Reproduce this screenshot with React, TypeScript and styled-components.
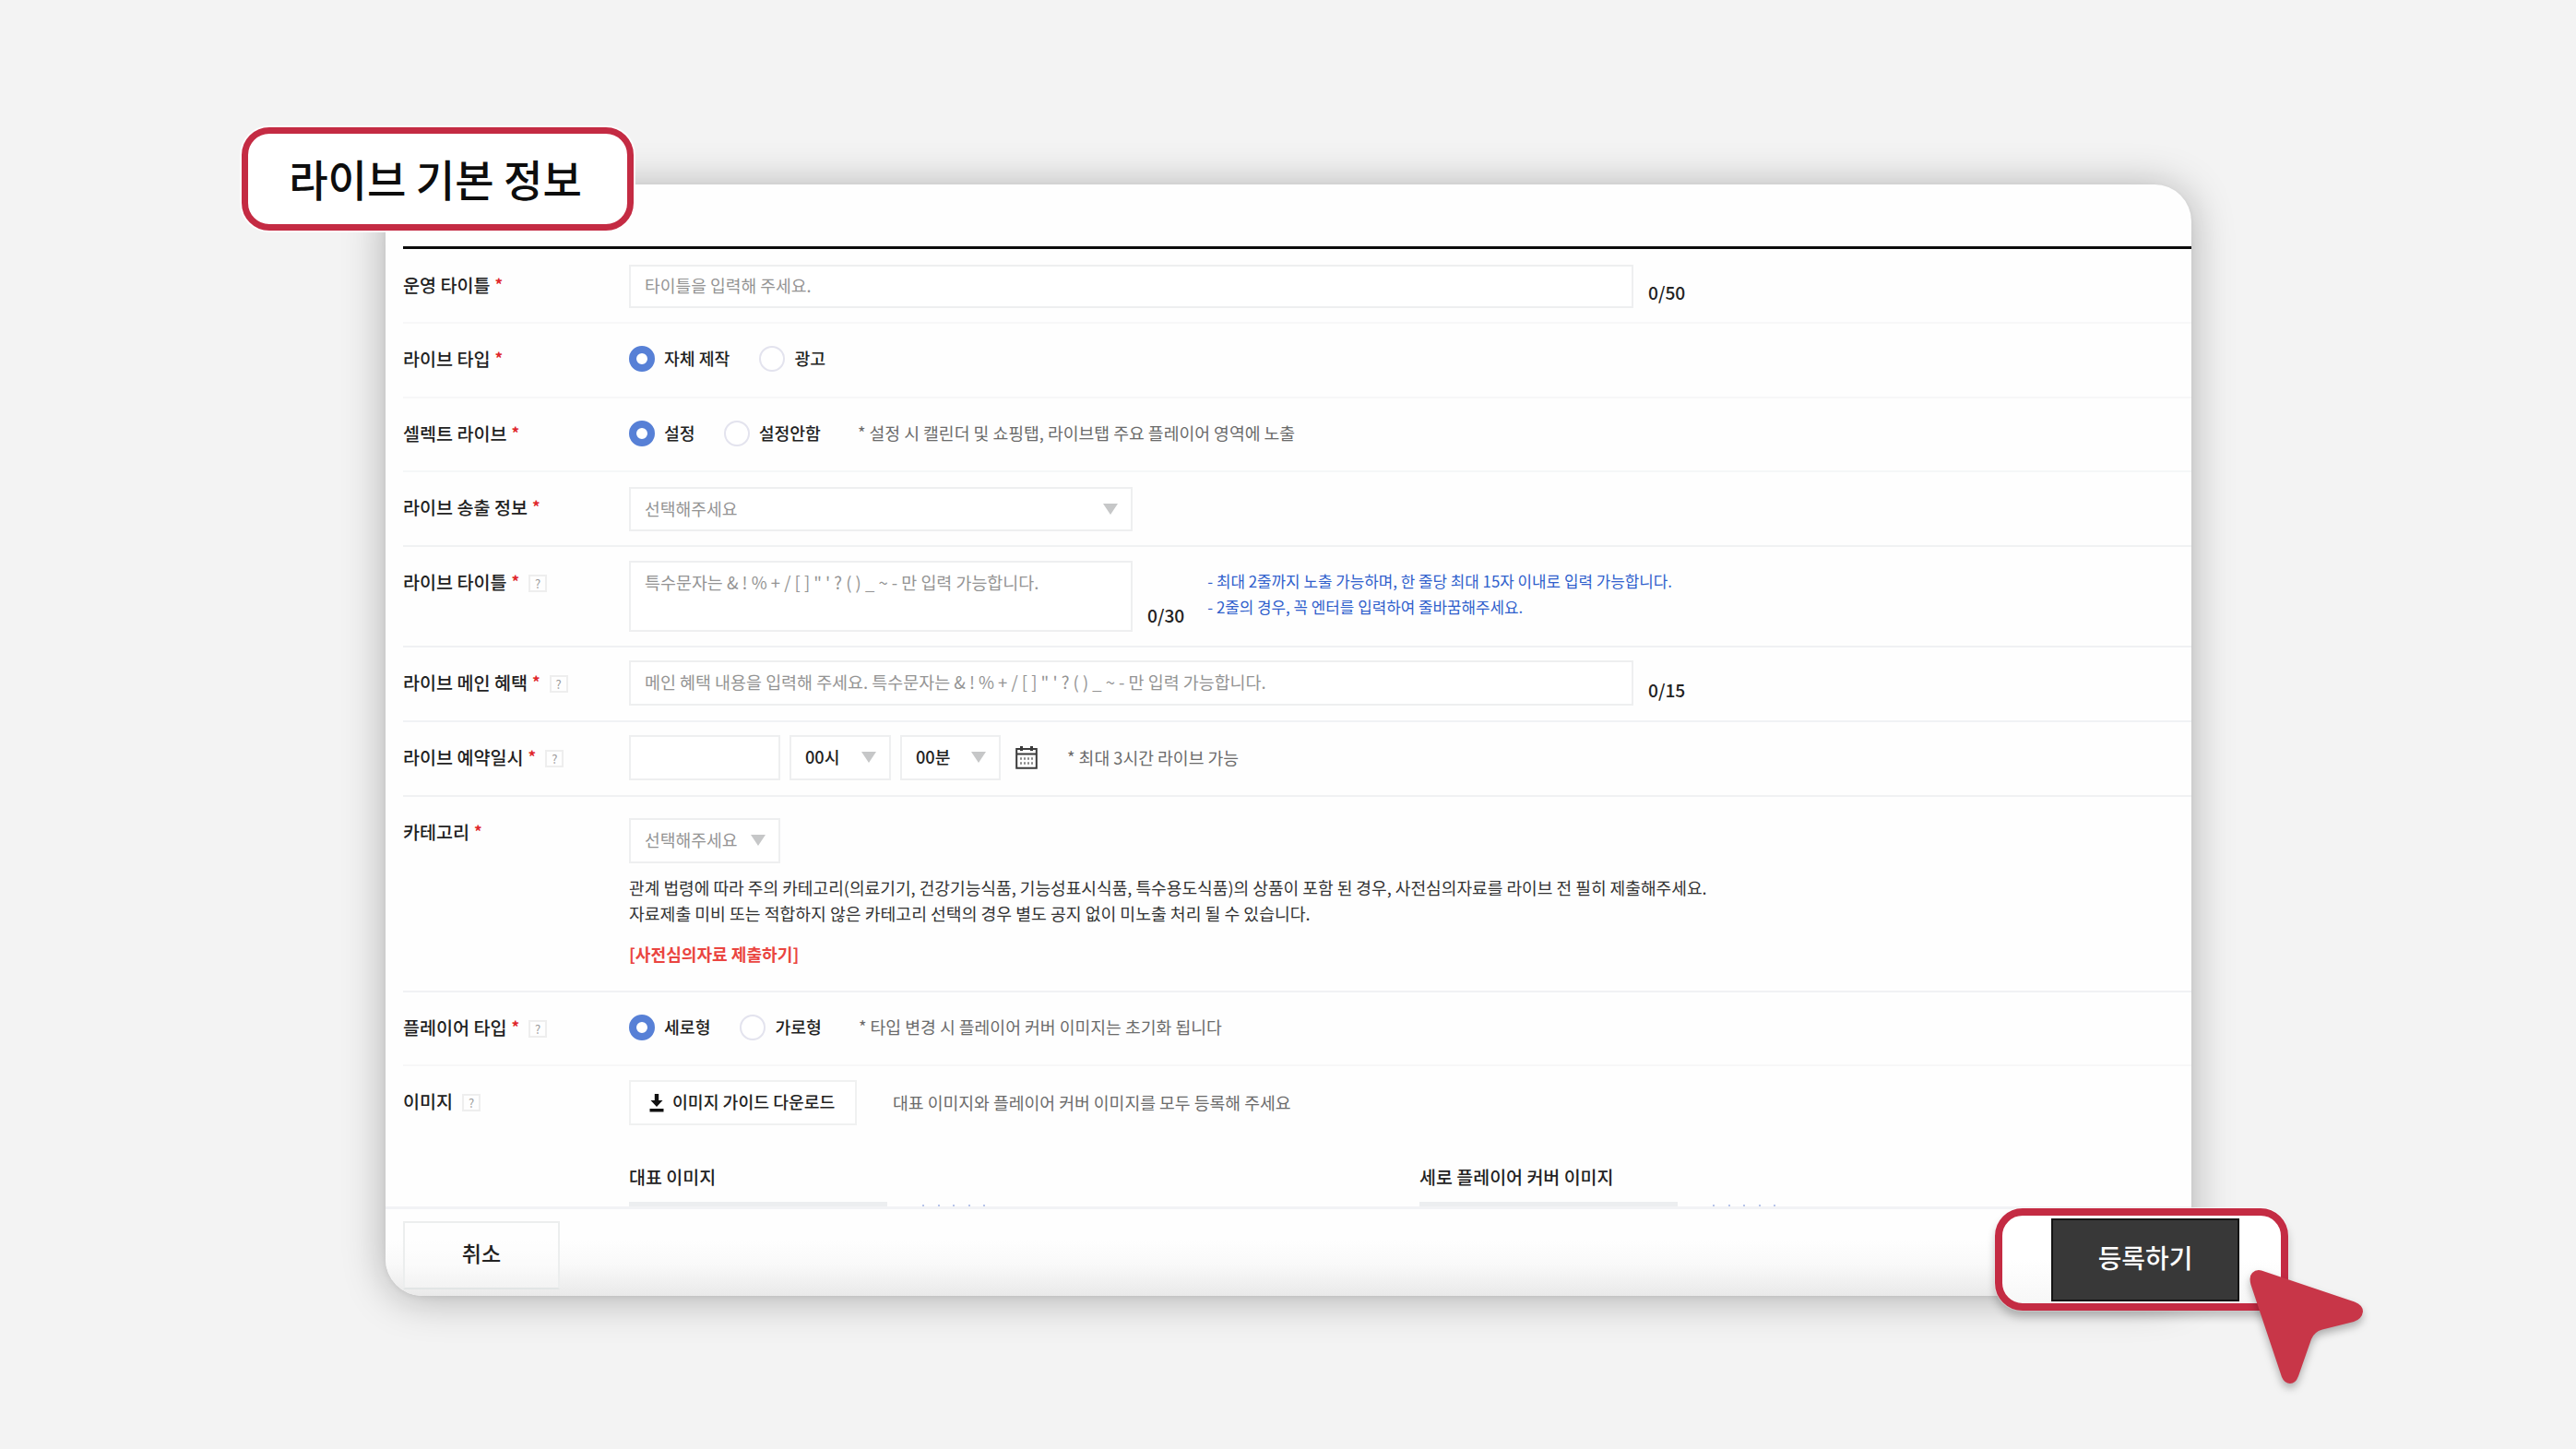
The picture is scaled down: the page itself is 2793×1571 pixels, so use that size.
import React from 'react';
import styled, { createGlobalStyle } from 'styled-components';

const GlobalStyle = createGlobalStyle`
  *, *::before, *::after { box-sizing: border-box; }
  body {
    margin: 0;
    background: #f3f3f3;
    font-family: "Noto Sans CJK KR", "Noto Sans", sans-serif;
    color: #222;
  }
  button { font-family: inherit; margin: 0; padding: 0; cursor: pointer; }
`;

const Page = styled.main`
  position: relative;
  width: 2793px;
  height: 1571px;
  padding: 200px 0 0 418px;
  overflow: hidden;
  background: #f3f3f3;
`;

const Panel = styled.section`
  display: flex;
  flex-direction: column;
  width: 1958px;
  height: 1205px;
  border-radius: 40px;
  overflow: hidden;
  background: #fefefe;
  box-shadow: 0 3px 46px rgba(0, 0, 0, 0.29), 0 2px 5px rgba(0, 0, 0, 0.05);
`;

const Form = styled.div`
  display: flex;
  flex-direction: column;
  height: 1108px;
  padding: 67px 0 0 19px;
  overflow: hidden;
`;

const Rows = styled.div`
  display: flex;
  flex-direction: column;
  border-top: 3px solid #0b0b0b;
`;

const Row = styled.div<{ $h: number; $line?: string }>`
  display: flex;
  flex: none;
  height: ${(p) => p.$h}px;
  border-bottom: 2px solid ${(p) => p.$line ?? '#f7f7f8'};
`;

const LabelCell = styled.div<{ $top?: number }>`
  display: flex;
  align-items: center;
  flex: none;
  width: 245px;
  height: 74px;
  margin-top: ${(p) => p.$top ?? 0}px;
  font-size: 19.6px;
  font-weight: 500;
  white-space: nowrap;
`;

const Star = styled.span`
  margin-left: 5px;
  font-size: 17px;
  line-height: 20px;
  font-weight: 700;
  color: #e0262b;
`;

const Help = styled.span`
  display: flex;
  align-items: center;
  justify-content: center;
  width: 20px;
  height: 19px;
  margin: 4px 0 0 10px;
  border: 2px solid #eeeeee;
  font-size: 13px;
  font-weight: 400;
  line-height: 13px;
  color: #9a9a9a;
`;

const Cell = styled.div<{ $top: number }>`
  display: flex;
  flex-direction: column;
  flex: 1;
  padding-top: ${(p) => p.$top}px;
`;

const Line = styled.div<{ $h?: number }>`
  display: flex;
  align-items: center;
  height: ${(p) => (p.$h ? p.$h + 'px' : 'auto')};
`;

const Field = styled.div<{ $w: number; $h: number; $dark?: boolean; $right?: number; $size?: number }>`
  display: flex;
  align-items: center;
  justify-content: space-between;
  flex: none;
  width: ${(p) => p.$w}px;
  height: ${(p) => p.$h}px;
  margin-right: ${(p) => p.$right ?? 0}px;
  padding: 0 14px 3px 15px;
  border: 2px solid #eeeff0;
  background: #fff;
  font-size: ${(p) => p.$size ?? 18.2}px;
  font-weight: ${(p) => (p.$dark ? 500 : 400)};
  line-height: 24px;
  white-space: nowrap;
  color: ${(p) => (p.$dark ? '#222' : '#949494')};
`;

const TextArea = styled(Field)`
  align-items: flex-start;
  padding-top: 9px;
`;

const Caret = styled.i`
  width: 0;
  height: 0;
  margin-top: 2px;
  border: 8px solid transparent;
  border-top: 12px solid #c6c7c8;
  border-bottom: 0;
`;

const Counter = styled.span<{ $down: number }>`
  align-self: flex-start;
  margin: ${(p) => p.$down}px 0 0 16px;
  font-size: 19.2px;
  line-height: 24px;
  font-weight: 500;
`;

const Tips = styled.div`
  display: flex;
  flex-direction: column;
  align-self: flex-start;
  margin: 8px 0 0 25px;
  font-size: 16.87px;
  line-height: 28px;
  white-space: nowrap;
  color: #3060cc;
`;

const RadioItem = styled.div<{ $right: number }>`
  display: flex;
  align-items: center;
  gap: 10px;
  margin-right: ${(p) => p.$right}px;
  font-size: 18.3px;
  font-weight: 500;
  line-height: 28px;
  white-space: nowrap;
`;

const RadioText = styled.span`
  margin-top: -2px;
`;

const Dot = styled.i<{ $on?: boolean }>`
  width: 28px;
  height: 28px;
  border-radius: 50%;
  border: ${(p) => (p.$on ? '8.5px solid #5780d6' : '2px solid #e3e3ee')};
  background: #fff;
`;

const Note = styled.span`
  margin-top: -2px;
  font-size: 18.25px;
  line-height: 28px;
  white-space: nowrap;
  color: #6b6b6b;
`;

const Notice = styled.p`
  margin: 12px 0 0;
  line-height: 28px;
  white-space: nowrap;
  color: #333;
`;

const NoticeLine = styled.span<{ $size: number }>`
  display: block;
  font-size: ${(p) => p.$size}px;
`;

const SubmitLink = styled.a`
  margin-top: 16px;
  font-size: 18.1px;
  line-height: 28px;
  font-weight: 700;
  color: #ea4540;
`;

const CalendarIcon = styled.svg`
  width: 24px;
  height: 25px;
  margin: 0 32px 0 16px;
`;

const GuideButton = styled.button`
  display: flex;
  align-items: center;
  width: 247px;
  height: 49px;
  margin-right: 39px;
  padding: 0 0 3px 20px;
  border: 2px solid #f0f1f1;
  background: #fff;
  font-size: 18.3px;
  font-weight: 500;
  line-height: 24px;
  white-space: nowrap;
  color: #222;
`;

const DownloadIcon = styled.svg`
  width: 16px;
  height: 20px;
  margin: 4px 9px 0 0;
`;

const Covers = styled.div`
  display: grid;
  grid-template-columns: 857px 1fr;
  margin-top: 42px;
`;

const CoverTitle = styled.div`
  height: 41px;
  font-size: 19.5px;
  line-height: 28px;
  font-weight: 500;
`;

const CoverBox = styled.div`
  width: 280px;
  height: 60px;
  background: #eceef0;
`;

const CoverRow = styled.div`
  display: flex;
  gap: 38px;
`;

const Ticks = styled.div`
  display: flex;
  gap: 14.5px;
  margin-top: 3px;
`;

const Tick = styled.i`
  width: 2px;
  height: 3px;
  background: #b7c4ea;
`;

const Footer = styled.footer`
  display: flex;
  flex: 1;
  padding: 13px 0 0 19px;
  border-top: 3px solid #f2f3f5;
  background: linear-gradient(#fefefe 35%, #f9f9f9 65%, #e9e9e9 100%);
`;

const CancelButton = styled.button`
  width: 170px;
  height: 74px;
  padding-bottom: 7px;
  border: 2px solid #eceeee;
  border-bottom-color: #e2e5e5;
  background: rgba(255, 255, 255, 0.3);
  font-size: 23px;
  font-weight: 500;
  color: #222;
`;

const TitleBadge = styled.h1`
  position: absolute;
  left: 262px;
  top: 138px;
  display: flex;
  align-items: center;
  justify-content: center;
  width: 425px;
  height: 112px;
  margin: 0;
  padding: 0 5px 2px 0;
  border: 7px solid #c42b43;
  border-radius: 30px;
  background: #fff;
  box-shadow: 0 0 0 2px rgba(255, 255, 255, 0.8);
  font-size: 46.1px;
  line-height: 60px;
  font-weight: 500;
  white-space: nowrap;
  color: #0d0d0d;
`;

const Highlight = styled.div`
  position: absolute;
  left: 2163px;
  top: 1310px;
  display: flex;
  width: 318px;
  height: 111px;
  padding: 3px 0 0 53px;
  border: 8px solid #c42b43;
  border-radius: 30px;
  background: linear-gradient(#fff 50%, #f7f7f7);
  box-shadow: 0 7px 10px rgba(0, 0, 0, 0.22), 0 0 0 1px rgba(255, 255, 255, 0.7);
`;

const RegisterButton = styled.button`
  width: 204px;
  height: 90px;
  padding-bottom: 7px;
  border: 2px solid #141414;
  background: #383838;
  font-size: 27.9px;
  font-weight: 500;
  color: #fff;
`;

const Pointer = styled.svg`
  position: absolute;
  left: 2430px;
  top: 1365px;
  width: 150px;
  height: 150px;
  filter: drop-shadow(0 5px 4px rgba(0, 0, 0, 0.28));
`;

type LabelProps = { text: string; required?: boolean; help?: boolean; top?: number };

function Label({ text, required = true, help, top }: LabelProps) {
  return (
    <LabelCell $top={top}>
      {text}
      {required && <Star>*</Star>}
      {help && <Help>?</Help>}
    </LabelCell>
  );
}

function Radio({ text, on, right }: { text: string; on?: boolean; right: number }) {
  return (
    <RadioItem $right={right}>
      <Dot $on={on} />
      <RadioText>{text}</RadioText>
    </RadioItem>
  );
}

function Cover({ title }: { title: string }) {
  return (
    <div>
      <CoverTitle>{title}</CoverTitle>
      <CoverRow>
        <CoverBox />
        <Ticks>
          {[0, 1, 2, 3, 4].map((n) => (
            <Tick key={n} />
          ))}
        </Ticks>
      </CoverRow>
    </div>
  );
}

export default function App() {
  return (
    <Page>
      <GlobalStyle />
      <Panel>
        <Form>
          <Rows>
            <Row $h={81}>
              <Label text="운영 타이틀" top={1} />
              <Cell $top={17}>
                <Line>
                  <Field $w={1089} $h={47}>타이틀을 입력해 주세요.</Field>
                  <Counter $down={18}>0/50</Counter>
                </Line>
              </Cell>
            </Row>
            <Row $h={81}>
              <Label text="라이브 타입" />
              <Cell $top={24}>
                <Line $h={28}>
                  <Radio text="자체 제작" on right={32} />
                  <Radio text="광고" right={0} />
                </Line>
              </Cell>
            </Row>
            <Row $h={80} $line="#f5f7f8">
              <Label text="셀렉트 라이브" />
              <Cell $top={24}>
                <Line $h={28}>
                  <Radio text="설정" on right={31} />
                  <Radio text="설정안함" right={40} />
                  <Note>* 설정 시 캘린더 및 쇼핑탭, 라이브탭 주요 플레이어 영역에 노출</Note>
                </Line>
              </Cell>
            </Row>
            <Row $h={81} $line="#f0f2f3">
              <Label text="라이브 송출 정보" />
              <Cell $top={16}>
                <Field $w={546} $h={48}>
                  선택해주세요
                  <Caret />
                </Field>
              </Cell>
            </Row>
            <Row $h={109} $line="#f0f1f3">
              <Label text="라이브 타이틀" help />
              <Cell $top={15}>
                <Line>
                  <TextArea $w={546} $h={77} $size={18.45}>{'특수문자는 & ! % + / [ ] " \' ? ( ) _ ~ - 만 입력 가능합니다.'}</TextArea>
                  <Counter $down={47}>0/30</Counter>
                  <Tips>
                    <span>- 최대 2줄까지 노출 가능하며, 한 줄당 최대 15자 이내로 입력 가능합니다.</span>
                    <span>- 2줄의 경우, 꼭 엔터를 입력하여 줄바꿈해주세요.</span>
                  </Tips>
                </Line>
              </Cell>
            </Row>
            <Row $h={81} $line="#f0f2f5">
              <Label text="라이브 메인 혜택" help />
              <Cell $top={14}>
                <Line>
                  <Field $w={1089} $h={49} $size={18.44}>{'메인 혜택 내용을 입력해 주세요. 특수문자는 & ! % + / [ ] " \' ? ( ) _ ~ - 만 입력 가능합니다.'}</Field>
                  <Counter $down={20}>0/15</Counter>
                </Line>
              </Cell>
            </Row>
            <Row $h={81} $line="#f0f1f3">
              <Label text="라이브 예약일시" help />
              <Cell $top={14}>
                <Line>
                  <Field $w={164} $h={49} $right={10} />
                  <Field $w={110} $h={49} $right={10} $dark>
                    00시
                    <Caret />
                  </Field>
                  <Field $w={109} $h={49} $dark>
                    00분
                    <Caret />
                  </Field>
                  <CalendarIcon viewBox="0 0 24 25" fill="none" stroke="#3a3a3a">
                    <path d="M1.2 3h21.6v20.8H1.2z" strokeWidth="2" />
                    <path d="M1 8.5h22" strokeWidth="2" />
                    <path d="M6.5 0v5M17.5 0v5" strokeWidth="3" />
                    <path d="M5 13.5h14M5 18.5h14" strokeWidth="2.5" strokeDasharray="2 2" stroke="#888" />
                  </CalendarIcon>
                  <Note>* 최대 3시간 라이브 가능</Note>
                </Line>
              </Cell>
            </Row>
            <Row $h={212} $line="#f1f2f4">
              <Label text="카테고리" />
              <Cell $top={23}>
                <Field $w={164} $h={49}>
                  선택해주세요
                  <Caret />
                </Field>
                <Notice>
                  <NoticeLine $size={18.13}>관계 법령에 따라 주의 카테고리(의료기기, 건강기능식품, 기능성표시식품, 특수용도식품)의 상품이 포함 된 경우, 사전심의자료를 라이브 전 필히 제출해주세요.</NoticeLine>
                  <NoticeLine $size={18.28}>자료제출 미비 또는 적합하지 않은 카테고리 선택의 경우 별도 공지 없이 미노출 처리 될 수 있습니다.</NoticeLine>
                </Notice>
                <SubmitLink>[사전심의자료 제출하기]</SubmitLink>
              </Cell>
            </Row>
            <Row $h={80}>
              <Label text="플레이어 타입" help />
              <Cell $top={24}>
                <Line $h={28}>
                  <Radio text="세로형" on right={32} />
                  <Radio text="가로형" right={40} />
                  <Note>* 타입 변경 시 플레이어 커버 이미지는 초기화 됩니다</Note>
                </Line>
              </Cell>
            </Row>
            <Row $h={180}>
              <Label text="이미지" required={false} help />
              <Cell $top={15}>
                <Line>
                  <GuideButton>
                    <DownloadIcon viewBox="0 0 16 20" fill="#111">
                      <path d="M5.8 0h4.4v7h4.3L8 14 1.5 7h4.3zM0.5 16h15v3.5h-15z" />
                    </DownloadIcon>
                    이미지 가이드 다운로드
                  </GuideButton>
                  <Note>대표 이미지와 플레이어 커버 이미지를 모두 등록해 주세요</Note>
                </Line>
                <Covers>
                  <Cover title="대표 이미지" />
                  <Cover title="세로 플레이어 커버 이미지" />
                </Covers>
              </Cell>
            </Row>
          </Rows>
        </Form>
        <Footer>
          <CancelButton>취소</CancelButton>
        </Footer>
      </Panel>
      <TitleBadge>라이브 기본 정보</TitleBadge>
      <Highlight>
        <RegisterButton>등록하기</RegisterButton>
      </Highlight>
      <Pointer viewBox="0 0 150 150">
        <path
          d="M22 12.5 L123 46.500 Q132 50 132 57 Q131 65 122 68 L88 76.500 Q79 79 76 87 L62 127 Q59 135 53 135 Q47 135 44 128 L10.500 28 Q8 19 12 15 Q16 11 22 12.500Z"
          fill="#c83648"
        />
      </Pointer>
    </Page>
  );
}
